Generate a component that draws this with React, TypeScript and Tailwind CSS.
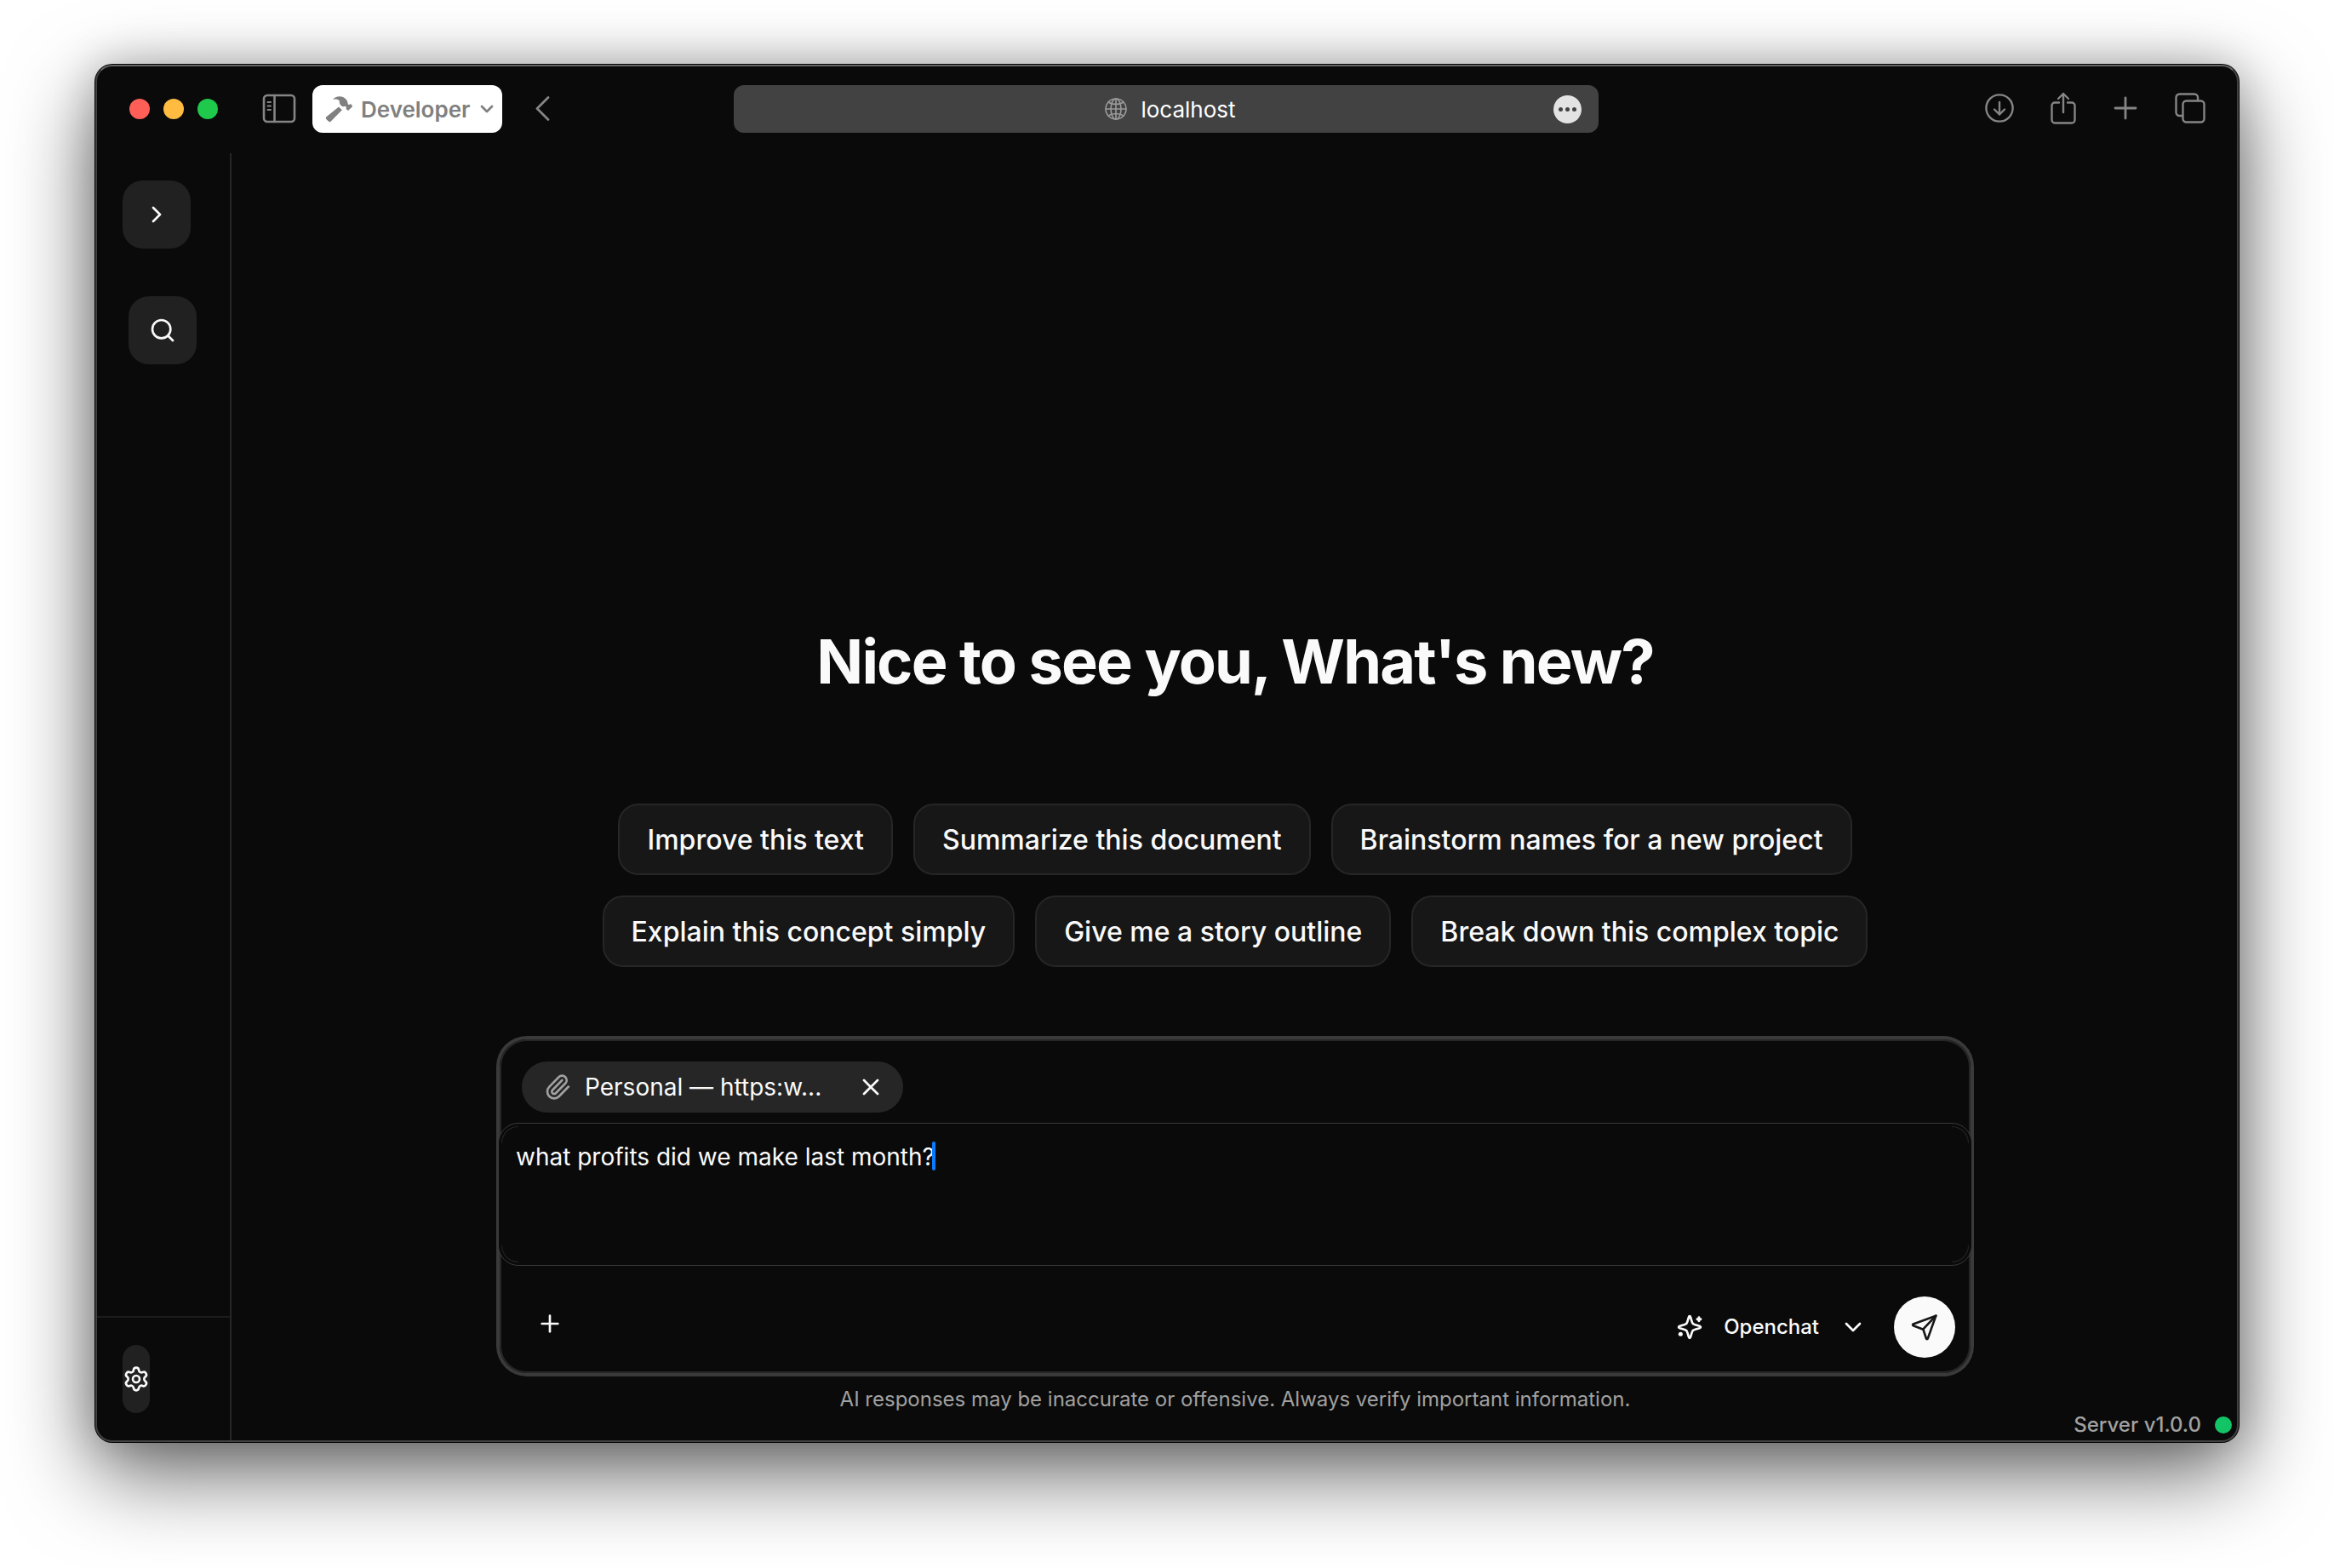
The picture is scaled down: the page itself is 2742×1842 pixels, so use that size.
import { ChevronDown, ChevronRight, Paperclip, Plus, Search, Settings, X } from "lucide-react";

const prompts = [
  ["Improve this text", "Summarize this document", "Brainstorm names for a new project"],
  ["Explain this concept simply", "Give me a story outline", "Break down this complex topic"],
];

const line = {
  fill: "none",
  stroke: "currentColor",
  strokeLinecap: "round" as const,
  strokeLinejoin: "round" as const,
};

function SidebarToggleIcon() {
  return (
    <svg width="40" height="36" viewBox="0 0 40 36" {...line} strokeWidth="2.6">
      <rect x="2" y="2" width="36" height="31" rx="4" />
      <path d="M14.500 2v31" />
      <path d="M6.500 10h3.500M6.500 14.500h3.500M6.500 19h3.500" strokeWidth="2" />
    </svg>
  );
}

function HammerIcon() {
  return (
    <svg width="32" height="32" viewBox="0 0 32 32" fill="currentColor">
      <path d="M9.500 4.200C12.500 1 17.500.2 21.500 2.300c3.200 1.700 5 4.400 5.300 8.200l1.200.6 1.200-.7c.5-.3 1-.2 1.300.2l1.300 1.600c.3.4.2.9-.1 1.200l-4.200 4.200c-.4.4-.9.4-1.300 0l-1.400-1.500c-.3-.3-.3-.7-.2-1.100l.4-1.100-1.300-1.200c-1.700.8-3.500.6-5-.7-1.700-1.500-2.200-3.400-1.800-5.600-2.100-1.700-4.400-2.100-7-1.600-.6.100-.8-.3-.4-.6z" />
      <path d="M16 13.500l3.800 3.700L6.800 30.500c-.8.800-2 .9-2.900.1L1.300 28c-.8-.9-.7-2 .1-2.800z" />
    </svg>
  );
}

function GlobeIcon() {
  return (
    <svg width="26" height="26" viewBox="0 0 26 26" {...line} strokeWidth="1.6">
      <circle cx="13" cy="13" r="12" />
      <ellipse cx="13" cy="13" rx="6" ry="12" />
      <path d="M13 1v24M1 13h24M4 5c5 3.400 13 3.400 18 0M4 21c5-3.400 13-3.400 18 0" />
    </svg>
  );
}

function DownloadIcon() {
  return (
    <svg width="34" height="34" viewBox="0 0 34 34" {...line} strokeWidth="2.4">
      <circle cx="17" cy="17" r="15.600" />
      <path d="M17 10v14.500M11 18.500l6 6 6-6" />
    </svg>
  );
}

function ShareIcon() {
  return (
    <svg width="30" height="38" viewBox="0 0 30 38" {...line} strokeWidth="2.4">
      <path d="M10 12.500H5A3.500 3.500 0 0 0 1.500 16v17A3.500 3.500 0 0 0 5 36.500h20a3.500 3.500 0 0 0 3.500-3.500V16a3.500 3.500 0 0 0-3.500-3.500h-5" />
      <path d="M15 24V2M9 8l6-6 6 6" />
    </svg>
  );
}

function NewTabIcon() {
  return (
    <svg width="28" height="28" viewBox="0 0 28 28" {...line} strokeWidth="2.800">
      <path d="M14 2v24M2 14h24" />
    </svg>
  );
}

function TabsIcon() {
  return (
    <svg width="36" height="36" viewBox="0 0 36 36" {...line} strokeWidth="2.400">
      <rect x="9.500" y="9.500" width="25" height="25" rx="4" />
      <path d="M9 27H5.500A4 4 0 0 1 1.500 23V5.500a4 4 0 0 1 4-4H23a4 4 0 0 1 4 4V9" />
    </svg>
  );
}

function SparklesIcon() {
  return (
    <svg width="32" height="32" viewBox="0 0 24 24" {...line} strokeWidth="2">
      <path d="M12 2.300c.5 0 .7.500.8 1l1.300 4.300a3 3 0 0 0 2.200 2.200l4.400 1.300c.6.200 1 .4 1 .9s-.4.700-1 .9l-4.400 1.300a3 3 0 0 0-2.200 2.200l-1.300 4.300c-.1.500-.3 1-.8 1s-.7-.5-.8-1l-1.300-4.300a3 3 0 0 0-2.200-2.200l-4.400-1.300c-.6-.2-1-.4-1-.9s.4-.7 1-.9l4.400-1.300a3 3 0 0 0 2.200-2.200l1.300-4.300c.1-.5.300-1 .8-1z" />
      <path d="M20.200 3.500v3M21.700 5h-3" strokeWidth="2.200" />
      <circle cx="4" cy="18.200" r="1.900" fill="currentColor" stroke="none" />
    </svg>
  );
}

function SendIcon() {
  return (
    <svg width="32" height="32" viewBox="0 0 24 24" {...line} strokeWidth="2">
      <path d="M22 2L14.800 22.200a.7.700 0 0 1-1.300 0L10.800 14 2 10.600a.7.700 0 0 1 0-1.300z" />
      <path d="M22 2L10.800 13.800" />
    </svg>
  );
}

function BrowserToolbar() {
  return (
    <header className="grid h-[102px] shrink-0 grid-cols-[1fr_1016px_1fr] items-center pr-0.5 pb-0.5 text-[#858585]">
      <div className="flex items-center pl-[38px]">
        <div className="flex gap-4">
          <button aria-label="Close" className="size-6 rounded-full bg-[#ff5f57]" />
          <button aria-label="Minimize" className="size-6 rounded-full bg-[#ffbc40]" />
          <button aria-label="Maximize" className="size-6 rounded-full bg-[#1ec94c]" />
        </div>
        <button aria-label="Toggle sidebar" className="ml-[52px]"><SidebarToggleIcon /></button>
        <button className="ml-[19px] flex h-14 items-center rounded-xl bg-white pr-2.5 pl-[15px] text-[26px] font-semibold text-[#808080]">
          <HammerIcon />
          <span className="ml-2.5">Developer</span>
          <svg width="16" height="12" viewBox="0 0 16 12" {...line} strokeWidth="2.800" className="ml-3">
            <path d="M2 3l6 6 6-6" />
          </svg>
        </button>
        <button aria-label="Back" className="ml-[38px]">
          <svg width="18" height="30" viewBox="0 0 18 30" {...line} strokeWidth="2.800"><path d="M16 1.500L3 14.500l13 13" /></svg>
        </button>
      </div>
      <div className="grid h-14 grid-cols-[1fr_auto_1fr] items-center rounded-xl bg-[#424242] px-5 text-[26px] text-white">
        <span />
        <div className="flex items-center gap-4 pl-2.5 text-[#9a9a9a]">
          <GlobeIcon />
          <span className="text-white">localhost</span>
        </div>
        <button aria-label="Page options" className="flex size-[33px] items-center justify-center gap-[3px] justify-self-end rounded-full bg-[#e3e3e3]">
          <span className="size-[5px] rounded-full bg-[#424242]" />
          <span className="size-[5px] rounded-full bg-[#424242]" />
          <span className="size-[5px] rounded-full bg-[#424242]" />
        </button>
      </div>
      <div className="flex items-center justify-end pr-[35px] pb-0.5">
        <button aria-label="Downloads"><DownloadIcon /></button>
        <button aria-label="Share" className="ml-[43px]"><ShareIcon /></button>
        <button aria-label="New tab" className="ml-11"><NewTabIcon /></button>
        <button aria-label="Show tabs" className="ml-11"><TabsIcon /></button>
      </div>
    </header>
  );
}

function Sidebar() {
  return (
    <aside className="flex w-[160px] shrink-0 flex-col border-r-2 border-[#262626]">
      <div className="flex flex-1 flex-col items-start gap-14 px-8 pt-8">
        <button aria-label="Expand sidebar" className="flex size-20 items-center justify-center rounded-3xl bg-[#212121]">
          <ChevronRight size={32} />
        </button>
        <button aria-label="Search" className="ml-[7px] flex size-20 items-center justify-center rounded-3xl bg-[#212121]">
          <Search size={32} />
        </button>
      </div>
      <div className="border-t-2 border-[#1c1c1c] p-8">
        <button aria-label="Settings" className="flex h-20 w-8 items-center justify-center rounded-full bg-[#212121]">
          <Settings size={32} />
        </button>
      </div>
    </aside>
  );
}

function Composer() {
  return (
    <form className="w-full max-w-[1728px] rounded-[32px] border-2 border-[#262626] ring-4 ring-[#3a3a3a]">
      <div className="px-6 pt-6 pb-3">
        <div className="flex h-[60px] w-[448px] items-center rounded-full bg-[#262626] px-[26px] text-[28px]">
          <Paperclip size={32} className="shrink-0 text-[#a1a1a1]" />
          <span className="ml-4 flex-1 truncate">Personal — https:w...</span>
          <button type="button" aria-label="Remove attachment" className="-mr-1"><X size={32} /></button>
        </div>
      </div>
      <div className="relative -mx-1 rounded-3xl border border-[#3a3a3a] bg-[#0a0a0a]">
        <textarea
          aria-label="Message"
          defaultValue="what profits did we make last month?"
          className="block h-[166px] w-full resize-none bg-transparent px-5 pt-[19px] text-[28px] leading-10 outline-none"
        />
        <span className="absolute top-[21px] left-[509px] h-[34px] w-1 rounded-full bg-[#0a7aff]" />
        <span className="absolute top-[3px] left-[3px] size-5 rounded-tl-[20px] border-t border-l border-[#262626]" />
        <span className="absolute top-[3px] right-[3px] size-5 rounded-tr-[20px] border-t border-r border-[#262626]" />
        <span className="absolute bottom-[3px] left-[3px] size-5 rounded-bl-[20px] border-b border-l border-[#262626]" />
        <span className="absolute right-[3px] bottom-[3px] size-5 rounded-br-[20px] border-r border-b border-[#262626]" />
      </div>
      <div className="flex items-center justify-between px-4 pt-9 pb-4">
        <button type="button" aria-label="Add attachment" className="mb-2 ml-[25px]"><Plus size={32} /></button>
        <div className="flex items-center">
          <button type="button" className="mr-8 flex items-center text-2xl font-medium">
            <SparklesIcon />
            <span className="mx-6">Openchat</span>
            <ChevronDown size={32} />
          </button>
          <button type="submit" aria-label="Send" className="flex size-[72px] items-center justify-center rounded-full bg-[#fafafa] text-[#171717]">
            <SendIcon />
          </button>
        </div>
      </div>
    </form>
  );
}

export default function App() {
  return (
    <div className="flex min-h-screen flex-col bg-white px-[111px] pt-[75px] pb-[147px] font-['Inter',sans-serif] text-[#fafafa]">
      <div className="flex flex-1 rounded-[21px] bg-black p-px shadow-[0_36px_100px_rgba(0,0,0,0.6),0_0_50px_rgba(0,0,0,0.2)]">
        <div className="relative flex flex-1 flex-col overflow-hidden rounded-[20px] border-2 border-[#424242] border-t-[#666] bg-[#0a0a0a]">
          <BrowserToolbar />
          <div className="-mx-0.5 flex flex-1">
            <Sidebar />
            <main className="flex flex-1 flex-col items-center justify-end px-12">
              <h1 className="text-7xl font-bold tracking-tight">Nice to see you, What's new?</h1>
              <div className="mt-[131px] flex flex-col items-center gap-6">
                {prompts.map((row) => (
                  <div key={row[0]} className="flex flex-wrap justify-center gap-6">
                    {row.map((prompt) => (
                      <button key={prompt} className="h-[84px] rounded-3xl border-2 border-[#262626] bg-[#171717] px-8 pt-0.5 text-[32px] font-medium">
                        {prompt}
                      </button>
                    ))}
                  </div>
                ))}
              </div>
              <div className="mt-[85px] flex w-full justify-center"><Composer /></div>
              <p className="pt-[15px] pb-8 text-2xl text-[#a1a1a1]">
                AI responses may be inaccurate or offensive. Always verify important information.
              </p>
            </main>
          </div>
          <div className="absolute right-0 bottom-0 flex items-center gap-4 pr-1.5 pb-0.5 text-2xl font-medium text-[#a1a1a1]">
            <span>Server v1.0.0</span>
            <span className="size-5 rounded-full bg-[#12c466]" />
          </div>
        </div>
      </div>
    </div>
  );
}
